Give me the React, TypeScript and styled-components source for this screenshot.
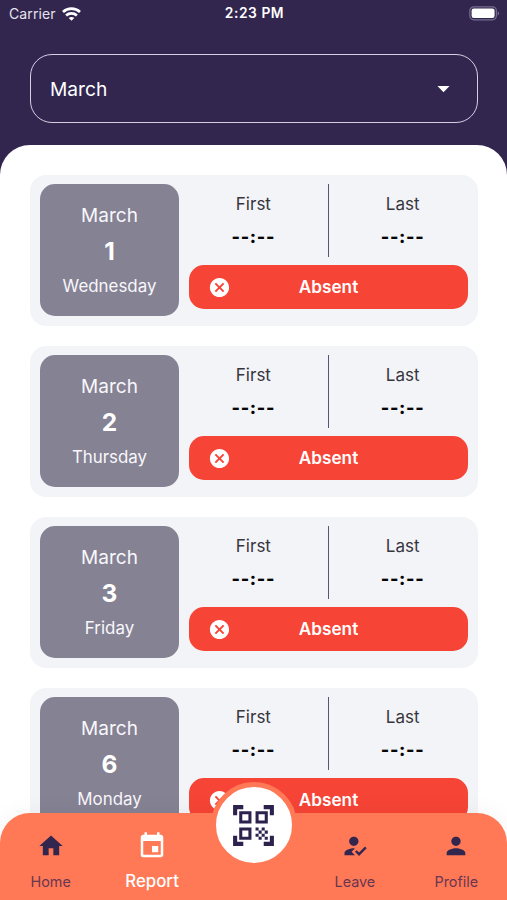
import React from "react";
import styled, { createGlobalStyle } from "styled-components";
import {
  MdArrowDropDown,
  MdCancel,
  MdEvent,
  MdHome,
  MdHowToReg,
  MdPerson,
  MdQrCodeScanner,
} from "react-icons/md";

const GlobalStyle = createGlobalStyle`
  * { box-sizing: border-box; }
  body {
    margin: 0;
    font-family: Inter, "Liberation Sans", sans-serif;
    background: #32264f;
  }
  svg { display: block; flex: none; }
`;

const Screen = styled.div`
  position: relative;
  display: flex;
  flex-direction: column;
  width: 507px;
  height: 900px;
  overflow: hidden;
  background: #32264f;
`;

const StatusBar = styled.header`
  display: grid;
  grid-template-columns: 1fr auto 1fr;
  align-items: center;
  height: 27px;
  padding: 0 7px 0 9px;
  color: #fff;
  font-size: 14px;
  line-height: 27px;
`;

const Carrier = styled.div`
  display: flex;
  align-items: center;
  gap: 6px;
  color: #e6e3ee;
  letter-spacing: 0.1px;
`;

const Clock = styled.div`
  font-weight: 600;
  font-size: 13.8px;
  letter-spacing: 0.55px;
`;

const BatterySlot = styled.div`
  display: flex;
  justify-content: flex-end;
`;

const MonthSelect = styled.div`
  display: flex;
  flex: none;
  align-items: center;
  justify-content: space-between;
  width: 448px;
  height: 69px;
  margin: 27px 0 0 30px;
  padding: 0 19px;
  border: 1.5px solid #d5cfe4;
  border-radius: 22px;
  color: #fff;
  font-size: 19.2px;
`;

const Sheet = styled.main`
  display: flex;
  flex: 1;
  flex-direction: column;
  gap: 20px;
  min-height: 0;
  margin-top: 22px;
  padding: 30px 29px 0 30px;
  border-radius: 30px 30px 0 0;
  background: #fff;
  overflow: hidden;
`;

const DayCard = styled.article`
  display: flex;
  flex: none;
  gap: 10px;
  height: 151px;
  padding: 9px 10px;
  border-radius: 16px;
  background: #f3f4f8;
`;

const DateTile = styled.div`
  display: flex;
  flex-direction: column;
  align-items: center;
  width: 139px;
  height: 132px;
  padding-top: 18px;
  border-radius: 15px;
  background: #858293;
  color: #f8f7fc;
`;

const TileMonth = styled.span`
  font-size: 19px;
  line-height: 28px;
`;

const TileNumber = styled.strong`
  color: #fff;
  font-size: 24.5px;
  font-weight: 700;
  line-height: 43px;
`;

const TileWeekday = styled.span`
  font-size: 16.9px;
  line-height: 26px;
`;

const Attendance = styled.div`
  flex: 1;
`;

const Times = styled.div`
  display: grid;
  grid-template-columns: 1fr 1.5px 1fr;
  height: 73px;
`;

const Divider = styled.div`
  background: #59527a;
`;

const TimeColumn = styled.div<{ $shift: number }>`
  display: flex;
  flex-direction: column;
  align-items: center;
  padding-top: 9px;
  padding-left: ${(p) => (p.$shift < 0 ? 0 : p.$shift)}px;
  padding-right: ${(p) => (p.$shift < 0 ? -p.$shift : 0)}px;
`;

const TimeLabel = styled.span`
  color: #37363d;
  font-size: 17px;
  line-height: 22px;
`;

const TimeValue = styled.span`
  margin-top: 9px;
  color: #050505;
  font-size: 18px;
  font-weight: 800;
  letter-spacing: 0.65px;
  line-height: 26px;
`;

const StatusPill = styled.div`
  display: grid;
  grid-template-columns: 20px 1fr 20px;
  align-items: center;
  height: 44px;
  margin-top: 8px;
  padding: 0 21px 0 19px;
  border-radius: 15px;
  background: #f64436;
  color: #fff;
  font-size: 17.2px;
  font-weight: 600;
  text-align: center;
`;

const StatusText = styled.span`
  padding: 0 0 2px 2px;
`;

const NavBar = styled.nav`
  position: absolute;
  right: 0;
  bottom: 0;
  left: 0;
  display: grid;
  grid-template-columns: repeat(5, 1fr);
  height: 87px;
  border-radius: 30px 30px 0 0;
  background: #ff7956;
  box-shadow: 0 0 24px rgba(0, 0, 0, 0.05);
`;

const NavItem = styled.a<{ $active?: boolean }>`
  display: flex;
  flex-direction: column;
  align-items: center;
  padding-top: ${(p) => (p.$active ? 18 : 19)}px;
  color: ${(p) => (p.$active ? "#fff" : "#32264f")};
`;

const NavLabel = styled.span<{ $active?: boolean }>`
  margin-top: ${(p) => (p.$active ? 10 : 12)}px;
  color: ${(p) => (p.$active ? "#fff" : "#6b3650")};
  font-size: ${(p) => (p.$active ? 16.8 : 14.4)}px;
  font-weight: ${(p) => (p.$active ? 500 : 400)};
  line-height: 20px;
`;

const ScanButton = styled.button`
  position: absolute;
  top: -31px;
  left: 50%;
  display: flex;
  align-items: center;
  justify-content: center;
  width: 86px;
  height: 86px;
  padding: 0;
  border: 5px solid #ff7956;
  border-radius: 50%;
  background: #fff;
  color: #2d214e;
  transform: translateX(-50%);
`;

const days = [
  { number: 1, weekday: "Wednesday" },
  { number: 2, weekday: "Thursday" },
  { number: 3, weekday: "Friday" },
  { number: 6, weekday: "Monday" },
];

function WifiIcon() {
  return (
    <svg width="19" height="14" viewBox="0 0 19 14" fill="none" stroke="#fff" strokeWidth="2.7">
      <path d="M1 4.9C5.7.6 13.3.6 18 4.9" />
      <path d="M4.1 8.4c3-2.8 7.8-2.8 10.8 0" />
      <path d="M9.5 13.8 6.7 11c1.5-1.5 4.1-1.5 5.6 0Z" fill="#fff" stroke="none" />
    </svg>
  );
}

function BatteryIcon() {
  return (
    <svg width="31" height="15" viewBox="0 0 31 15">
      <rect x="0.8" y="0.8" width="26.6" height="13" rx="4" fill="none" stroke="#756d8d" strokeWidth="1.2" />
      <rect x="2.6" y="2.6" width="23" height="9.4" rx="2.2" fill="#fff" />
      <path d="M28.7 5.2c2 .8 2 3.6 0 4.4Z" fill="#756d8d" />
    </svg>
  );
}

function DayEntry({ number, weekday }: { number: number; weekday: string }) {
  return (
    <DayCard>
      <DateTile>
        <TileMonth>March</TileMonth>
        <TileNumber>{number}</TileNumber>
        <TileWeekday>{weekday}</TileWeekday>
      </DateTile>
      <Attendance>
        <Times>
          <TimeColumn $shift={-10}>
            <TimeLabel>First</TimeLabel>
            <TimeValue>--:--</TimeValue>
          </TimeColumn>
          <Divider />
          <TimeColumn $shift={8}>
            <TimeLabel>Last</TimeLabel>
            <TimeValue>--:--</TimeValue>
          </TimeColumn>
        </Times>
        <StatusPill>
          <MdCancel size={23} />
          <StatusText>Absent</StatusText>
        </StatusPill>
      </Attendance>
    </DayCard>
  );
}

export default function App() {
  return (
    <Screen>
      <GlobalStyle />
      <StatusBar>
        <Carrier>
          Carrier
          <WifiIcon />
        </Carrier>
        <Clock>2:23 PM</Clock>
        <BatterySlot>
          <BatteryIcon />
        </BatterySlot>
      </StatusBar>
      <MonthSelect>
        March
        <MdArrowDropDown size={29} />
      </MonthSelect>
      <Sheet>
        {days.map((day) => (
          <DayEntry key={day.number} {...day} />
        ))}
      </Sheet>
      <NavBar>
        <NavItem>
          <MdHome size={28} />
          <NavLabel>Home</NavLabel>
        </NavItem>
        <NavItem $active>
          <MdEvent size={30} />
          <NavLabel $active>Report</NavLabel>
        </NavItem>
        <span />
        <NavItem>
          <MdHowToReg size={28} />
          <NavLabel>Leave</NavLabel>
        </NavItem>
        <NavItem>
          <MdPerson size={28} />
          <NavLabel>Profile</NavLabel>
        </NavItem>
        <ScanButton aria-label="Scan">
          <MdQrCodeScanner size={49} />
        </ScanButton>
      </NavBar>
    </Screen>
  );
}
